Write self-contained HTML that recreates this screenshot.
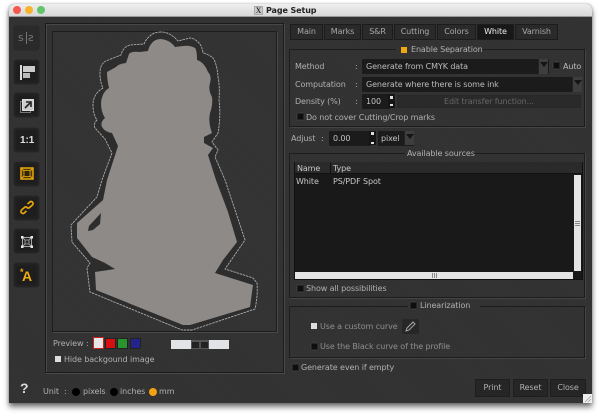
<!DOCTYPE html>
<html><head><meta charset="utf-8">
<style>
html,body{margin:0;padding:0;background:#fff;width:600px;height:416px;overflow:hidden}
body{font-family:"DejaVu Sans",sans-serif;font-size:8px;color:#aaa}
div,span{position:absolute;box-sizing:border-box}
#all{left:0;top:0;width:600px;height:416px;filter:blur(.3px);letter-spacing:-.1px}
#win{left:9px;top:4px;width:583px;height:399px;background-color:#333;border-radius:5px 5px 0 0;box-shadow:0 4px 6px rgba(0,0,0,.55),0 0 3px rgba(0,0,0,.25);overflow:hidden}
#tex{left:0;top:13px;width:583px;height:386px;background:repeating-linear-gradient(45deg,#353535 0 1px,#303030 1px 2px)}
#bar{left:0;top:0;width:583px;height:13px;background:linear-gradient(#eee,#d8d8d8);border-bottom:1px solid #999}
.l{left:0;top:0;position:absolute;white-space:nowrap;line-height:10px;color:#b0b0b0}
.btn{left:14px;width:25px;height:24px;background:#1e1e1e;border-radius:3px;box-shadow:0 0 1px #111,inset 0 0 3px #292929;border:1px solid #242424}
.tab{top:24px;height:16px;background:#2a2a2a;border:1px solid #1c1c1c;text-align:center;line-height:14px;color:#a8a8a8}
.grp{border:1px solid #1c1c1c;box-shadow:1px 1px 0 #444}
.inp{background:#1b1b1b;height:15px;border-radius:1px}
.cb{width:7px;height:7px;background:#0e0e0e;border:1px solid #262626;box-shadow:0 0 1px #555}
.dd{background:#3e3e3e;border-left:1px solid #222}
.dd:after{content:"";position:absolute;left:1px;top:3px;border-left:4px solid transparent;border-right:4px solid transparent;border-top:5px solid #151515}
</style></head><body>
<div id="all">
<div id="win">
<div id="tex"></div>
<div id="bar">
<div style="left:4px;top:2px;width:8px;height:8px;border-radius:50%;background:#f4584f"></div>
<div style="left:16px;top:2px;width:8px;height:8px;border-radius:50%;background:#f8b42a"></div>
<div style="left:28px;top:2px;width:8px;height:8px;border-radius:50%;background:#62c46b"></div>
<div style="left:245px;top:2px;width:9px;height:9px;background:#ccc;border:1px solid #aaa;font:bold 8px/7px 'Liberation Serif',serif;color:#333;text-align:center">X</div>
<div class="l" style="left:257px;top:1px;color:#222;font:bold 8px/11px 'DejaVu Sans',sans-serif">Page Setup</div>
</div>
</div>
<div style="left:45px;top:23px;width:239px;height:350px;border:1px solid #1b1b1b;box-shadow:1px 1px 0 #4a4a4a,inset 1px 1px 0 #474747"></div>
<div style="left:52px;top:31px;width:225px;height:301px;border:1px solid #1d1d1d;box-shadow:1px 1px 0 #494949;background:repeating-linear-gradient(45deg,#363636 0 1px,#313131 1px 2px)"></div>

<svg style="position:absolute;left:0;top:0" width="600" height="416" viewBox="0 0 600 416">
<path d="M161 32Q154 32 150 36Q146 39 144 44L130 45Q123 47 121 55L106 61Q100 64 100 73Q100 82 103 88Q93 94 93 105Q93 114 97 120Q93 124 95 128L105 139L112 153L102 180L97 197L71 225L72 242L90 263L87 268L90 292L182 330L192 330L255 309Q258 295 257 283L253 278L225 269L245 240L235 210L225 180L215 157L218 150L212 142L218 133Q221 116 219 100Q220 87 218 77Q217 64 213 58Q208 54 203 53Q202 46 199 43Q194 38 190 38L178 41Q170 32 161 32Z" fill="#2d2d2d" stroke="#ababab" stroke-width=".9" stroke-dasharray="2.5 .8" stroke-linejoin="round"/>
<path fill="#8d8a88" d="M161 39Q155 39 152 43Q149 46 148 51L140 52Q131 51 129 54L126 63Q118 64 116 67L107 72Q107 80 109 88Q102 92 101 103Q101 112 105 118Q100 122 102 127Q105 132 112 133L118 146L107 180L103 200L77 223L77 238L92 257L105 263L115 269L95 272L96 290L183 325L190 325L250 307L253 285L215 273L223 260L237 242L228 212L216 180L208 155L213 148L204 143L204 137L212 133Q208 122 210 113Q213 105 212 97Q208 90 210 83Q212 76 208 72Q204 62 197 60Q197 50 195 48Q190 45 183 46L175 47Q170 40 161 39Z"/>
<path fill="#2d2d2d" d="M101 213L89 226L88 231L93 230L100 224Z"/>
</svg>

<div class="btn" style="top:26px;background:#2b2b2b;border-color:#2b2b2b"></div>
<div class="l" style="left:18px;top:33px;font-size:11px;color:#777">s</div>
<div style="left:26px;top:32px;width:1px;height:12px;background:#777"></div>
<div class="l" style="left:28px;top:33px;font-size:11px;color:#777;transform:scaleX(-1)">s</div>
<div class="btn" style="top:60px"></div>
<div style="left:20px;top:65px;width:2px;height:15px;background:#ddd"></div>
<div style="left:23px;top:66px;width:12px;height:6px;background:#ccc"></div>
<div style="left:23px;top:73px;width:7px;height:5px;background:#bbb"></div>
<div class="btn" style="top:93px"></div>
<div style="left:20px;top:101px;width:11px;height:12px;border:1px solid #777"></div>
<div style="left:22px;top:99px;width:12px;height:12px;background:#ccc;border:1px solid #ddd"></div>
<svg style="position:absolute;left:22px;top:99px" width="12" height="12"><path d="M3 9L8 4M4 3H9V8" stroke="#222" stroke-width="1.6" fill="none"/></svg>
<div class="btn" style="top:128px"></div>
<div class="l" style="left:20px;top:135px;font:bold 10px/11px 'Liberation Sans',sans-serif;color:#e0e0e0">1:1</div>
<div class="btn" style="top:162px"></div>
<svg style="position:absolute;left:20px;top:167px" width="14" height="13"><rect x="1" y="1" width="12" height="11" fill="#4a3906" stroke="#e8a80c" stroke-width="1.5"/><rect x="4" y="3.500" width="6" height="6" fill="#2e2405" stroke="#c98f0a"/><path d="M1 1L4 4M13 1L10 4M1 12L4 9M13 12L10 9" stroke="#e8a80c"/></svg>
<div class="btn" style="top:196px"></div>
<svg style="position:absolute;left:19px;top:200px" width="16" height="15"><path d="M2 10.500L6 7Q7.500 6.500 8.500 8M2 10.500Q1.500 13.500 4.500 13.500L7.500 11M14 4.500L10 8Q8.500 8.500 7.500 7M14 4.500Q14.500 1.500 11.500 1.500L8.500 4" fill="none" stroke="#eaa70e" stroke-width="1.700"/></svg>
<div class="btn" style="top:229px"></div>
<svg style="position:absolute;left:21px;top:236px" width="12" height="12"><rect x="1.500" y="1.500" width="9" height="9" fill="none" stroke="#aaa"/><path d="M2 2L4 4M10 2L8 4M2 10L4 8M10 10L8 8" stroke="#999"/><rect x="4" y="4" width="4" height="4" fill="#2a2a2a" stroke="#aaa" stroke-width=".8"/><g fill="#e8e8e8"><rect x="0" y="0" width="2.500" height="2.500"/><rect x="9.500" y="0" width="2.500" height="2.500"/><rect x="0" y="9.500" width="2.500" height="2.500"/><rect x="9.500" y="9.500" width="2.500" height="2.500"/></g></svg>
<div class="btn" style="top:263px"></div>
<div class="l" style="left:22px;top:269px;font:bold 14px/14px 'Liberation Sans',sans-serif;color:#eead14">A</div>
<div class="l" style="left:20px;top:268px;font:bold 9px/9px 'Liberation Sans',sans-serif;color:#eead14">*</div>

<div class="l" style="left:53px;top:339px">Preview</div><div class="l" style="left:86px;top:339px">:</div>
<div style="left:93px;top:337px;width:11px;height:12px;background:#e6e6e6;border:1px solid #c22"></div>
<div style="left:105px;top:338px;width:11px;height:11px;background:#d80f0f;border:1px solid #222"></div>
<div style="left:117px;top:338px;width:11px;height:11px;background:#27942d;border:1px solid #222"></div>
<div style="left:130px;top:338px;width:11px;height:11px;background:#23238a;border:1px solid #222"></div>
<div style="left:171px;top:340px;width:58px;height:9px;background:#e2e3e6"></div>
<div style="left:191px;top:340px;width:18px;height:9px;background:#555"></div>
<div style="left:192px;top:342px;width:7px;height:6px;background:#222"></div>
<div style="left:201px;top:342px;width:7px;height:6px;background:#222"></div>
<div style="left:55px;top:356px;width:6px;height:6px;background:#ddd"></div>
<div class="l" style="left:64px;top:355px">Hide backgound image</div>
<div class="l" style="left:20px;top:381px;font:bold 14px/14px 'Liberation Sans',sans-serif;color:#ddd">?</div>
<div class="l" style="left:43px;top:387px">Unit</div><div class="l" style="left:64px;top:387px">:</div>
<div style="left:72px;top:388px;width:8px;height:8px;border-radius:50%;background:#000"></div>
<div class="l" style="left:83px;top:387px">pixels</div>
<div style="left:110px;top:388px;width:8px;height:8px;border-radius:50%;background:#000"></div>
<div class="l" style="left:120px;top:387px">inches</div>
<div style="left:149px;top:388px;width:8px;height:8px;border-radius:50%;background:#f3a30f"></div>
<div class="l" style="left:159px;top:387px">mm</div>

<div class="tab" style="left:290px;width:33px">Main</div>
<div class="tab" style="left:324px;width:37px">Marks</div>
<div class="tab" style="left:362px;width:31px">S&amp;R</div>
<div class="tab" style="left:394px;width:42px">Cutting</div>
<div class="tab" style="left:437px;width:39px">Colors</div>
<div class="tab" style="left:477px;width:37px;background:#181818;color:#eee">White</div>
<div class="tab" style="left:515px;width:43px">Varnish</div>

<div class="grp" style="left:289px;top:49px;width:296px;height:78px"></div>
<div style="left:396px;top:45px;width:85px;height:9px;background:#333"></div>
<div style="left:401px;top:47px;width:6px;height:6px;background:#eea912"></div>
<div class="l" style="left:411px;top:45px">Enable Separation</div>
<div class="l" style="left:295px;top:62px">Method</div><div class="l" style="left:355px;top:62px">:</div>
<div class="inp" style="left:362px;top:59px;width:187px"></div>
<div class="dd" style="left:538px;top:59px;width:10px;height:15px"></div>
<div class="l" style="left:366px;top:62px;color:#bcbcbc">Generate from CMYK data</div>
<div class="cb" style="left:553px;top:62px"></div>
<div class="l" style="left:563px;top:62px;color:#bcbcbc">Auto</div>
<div class="l" style="left:295px;top:80px">Computation</div><div class="l" style="left:355px;top:80px">:</div>
<div class="inp" style="left:362px;top:77px;width:220px"></div>
<div class="dd" style="left:572px;top:77px;width:10px;height:15px"></div>
<div class="l" style="left:366px;top:80px;color:#bcbcbc">Generate where there is some ink</div>
<div class="l" style="left:295px;top:97px">Density (%)</div><div class="l" style="left:355px;top:97px">:</div>
<div class="inp" style="left:362px;top:94px;width:28px"></div>
<div class="l" style="left:366px;top:97px;color:#c4c4c4">100</div>
<div style="left:388px;top:94px;width:7px;height:14px;background:#151515"></div>
<div style="left:390px;top:96px;width:3px;height:3px;background:#ddd"></div>
<div style="left:390px;top:104px;width:3px;height:2px;background:#ddd"></div>
<div style="left:397px;top:95px;width:184px;height:13px;background:#2a2a2a;border:1px solid #272727;text-align:center;line-height:11px;color:#666">Edit transfer function...</div>
<div class="cb" style="left:297px;top:113px"></div>
<div class="l" style="left:306px;top:113px">Do not cover Cutting/Crop marks</div>

<div class="l" style="left:291px;top:134px">Adjust</div><div class="l" style="left:321px;top:134px">:</div>
<div class="inp" style="left:329px;top:131px;width:42px"></div>
<div class="l" style="left:333px;top:134px;color:#c4c4c4">0.00</div>
<div style="left:369px;top:131px;width:7px;height:14px;background:#151515"></div>
<div style="left:371px;top:132px;width:3px;height:3px;background:#ddd"></div>
<div style="left:371px;top:142px;width:3px;height:2px;background:#ddd"></div>
<div class="inp" style="left:378px;top:131px;width:36px"></div>
<div class="l" style="left:381px;top:134px;color:#c4c4c4">pixel</div>
<div class="dd" style="left:404px;top:131px;width:10px;height:14px"></div>

<div class="grp" style="left:289px;top:153px;width:296px;height:145px"></div>
<div style="left:405px;top:149px;width:65px;height:9px;background:#333"></div>
<div class="l" style="left:407px;top:149px">Available sources</div>
<div style="left:294px;top:162px;width:289px;height:118px;background:#191919;border:1px solid #111"></div>
<div style="left:295px;top:162px;width:287px;height:12px;background:#2a2a2a;border-bottom:1px solid #111"></div>
<div style="left:330px;top:163px;width:1px;height:11px;background:#111"></div>
<div class="l" style="left:297px;top:164px;color:#c8c8c8">Name</div>
<div class="l" style="left:333px;top:164px;color:#c8c8c8">Type</div>
<div class="l" style="left:296px;top:177px;color:#c8c8c8">White</div>
<div class="l" style="left:333px;top:177px;color:#c8c8c8">PS/PDF Spot</div>
<div style="left:574px;top:175px;width:7px;height:96px;background:#e4e4e4"></div>
<div style="left:575px;top:221px;width:5px;height:5px;background:repeating-linear-gradient(#888 0 1px,#e4e4e4 1px 2px)"></div>
<div style="left:295px;top:272px;width:278px;height:7px;background:#e4e4e4"></div>
<div style="left:432px;top:273px;width:5px;height:5px;background:repeating-linear-gradient(90deg,#888 0 1px,#e4e4e4 1px 2px)"></div>
<div class="cb" style="left:297px;top:285px"></div>
<div class="l" style="left:306px;top:284px">Show all possibilities</div>

<div class="grp" style="left:289px;top:306px;width:296px;height:52px"></div>
<div style="left:408px;top:302px;width:72px;height:9px;background:#333"></div>
<div class="cb" style="left:410px;top:302px"></div>
<div class="l" style="left:420px;top:301px">Linearization</div>
<div style="left:311px;top:323px;width:6px;height:6px;background:#ddd"></div>
<div class="l" style="left:320px;top:322px;color:#8e8e8e">Use a custom curve</div>
<div style="left:402px;top:319px;width:17px;height:15px;background:#272727;border-radius:2px"></div>
<svg style="position:absolute;left:404px;top:320px" width="13" height="13"><path d="M2 11L3 8L9 2L11 4L5 10Z" fill="none" stroke="#aaa"/></svg>
<div class="cb" style="left:311px;top:343px"></div>
<div class="l" style="left:320px;top:342px;color:#8e8e8e">Use the Black curve of the profile</div>
<div class="cb" style="left:292px;top:364px"></div>
<div class="l" style="left:301px;top:363px">Generate even if empty</div>

<div style="left:475px;top:379px;width:35px;height:18px;background:#262626;border:1px solid #1e1e1e;text-align:center;line-height:16px;color:#b0b0b0">Print</div>
<div style="left:513px;top:379px;width:35px;height:18px;background:#262626;border:1px solid #1e1e1e;text-align:center;line-height:16px;color:#b0b0b0">Reset</div>
<div style="left:550px;top:379px;width:36px;height:18px;background:#262626;border:1px solid #1e1e1e;text-align:center;line-height:16px;color:#b0b0b0">Close</div>
<div style="left:583px;top:394px;width:9px;height:9px;background:#eee"></div>
<svg style="position:absolute;left:584px;top:395px" width="8" height="8"><path d="M1 7L7 1M4 7L7 4" stroke="#999" stroke-width=".7"/></svg>
</div>
</body></html>
